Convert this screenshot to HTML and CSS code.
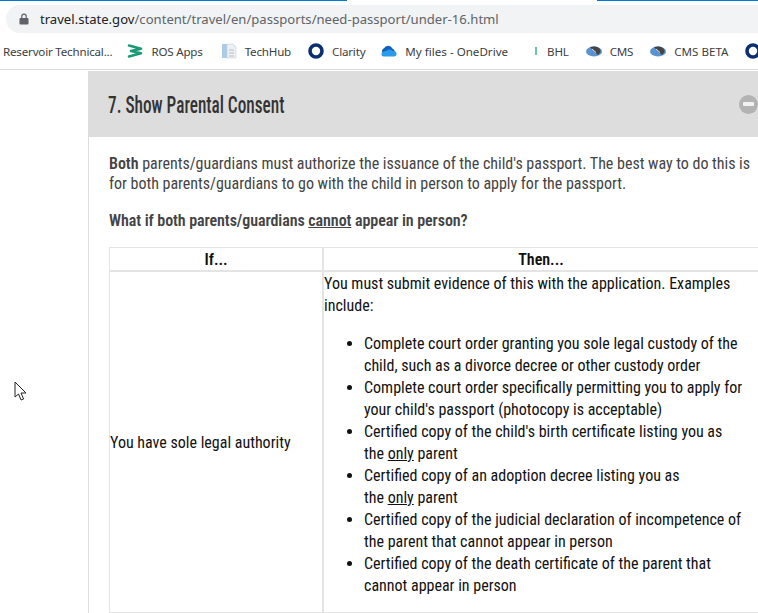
FILE: index.html
```html
<!DOCTYPE html>
<html lang="en">
<head>
  <meta charset="UTF-8">
  <title>Apply for a passport: under 16</title>
  <link rel="stylesheet" href="styles.css">
</head>
<body>
<div class="browser">
  <!-- top strip -->
  <div class="progress">
    <span class="progress-left"></span>
    <span class="progress-right"></span>
  </div>

  <!-- address bar -->
  <div class="omnibox">
    <svg class="lock" width="10" height="12" viewBox="0 0 10 12"><path d="M2.2 5V3.4a2.8 2.8 0 0 1 5.6 0V5h.9c.4 0 .8.4.8.8v5c0 .4-.4.8-.8.8H1.3c-.4 0-.8-.4-.8-.8v-5c0-.4.4-.8.8-.8zm1.2 0h3.2V3.4a1.6 1.6 0 0 0-3.2 0z" fill="#5f6368"/></svg>
    <span class="url"><span class="host">travel.state.gov</span>/content/travel/en/passports/need-passport/under-16.html</span>
  </div>

  <!-- bookmarks -->
  <div class="bookmarks">
    <span class="bm bm-first">Reservoir Technical...</span>
    <span class="bm bm-ros">
      <svg width="16" height="16" viewBox="0 0 16 16"><path d="M2 2.5l12 3.2-10 2.3 10 2.3-12 3.2" fill="none" stroke="#1c9a78" stroke-width="2.6" stroke-linejoin="round" stroke-linecap="round"/></svg>
      ROS Apps
    </span>
    <span class="bm bm-tech">
      <svg width="16" height="16" viewBox="0 0 16 16"><rect x="1" y="1" width="5" height="14" fill="#a9cbe8"/><path d="M6 1h6l3 3v11H6z" fill="#eef1f4" stroke="#c6ccd2" stroke-width=".6"/><path d="M8 7h5M8 10h5M8 13h5" stroke="#b4bcc4"/></svg>
      TechHub
    </span>
    <span class="bm bm-clarity">
      <svg width="16" height="16" viewBox="0 0 16 16"><circle cx="8" cy="8" r="6" fill="none" stroke="#0c2f73" stroke-width="3.6"/></svg>
      Clarity
    </span>
    <span class="bm bm-drive">
      <svg width="17" height="12" viewBox="0 0 17 12"><path d="M3.5 9A3.2 3.2 0 0 1 4 3.3 4.6 4.6 0 0 1 12.4 3.4 3.6 3.6 0 0 1 14 9z" fill="#0f62b8"/><path d="M4 11.5a2.4 2.4 0 0 1-.4-4.8L7 5.6a3.5 3.5 0 0 1 5.5.4h1.6a2.8 2.8 0 0 1 .4 5.5z" fill="#2a9bea"/></svg>
      My files - OneDrive
    </span>
    <span class="bm bm-bhl">
      <svg width="3" height="8" viewBox="0 0 3 8"><rect x="1" width="2" height="8" fill="#62c7b4"/></svg>
      BHL
    </span>
    <span class="bm bm-cms">
      <svg width="16" height="11" viewBox="0 0 16 11"><ellipse cx="8" cy="5.5" rx="8" ry="5" fill="#5b93cf"/><path d="M4 1.2c3-1.2 7-1 9 1 1.5 1.5 2 3 1 4.5l-2 2.2z" fill="#454545"/><path d="M6 3l4 3.5" stroke="#ddd" stroke-width="1"/></svg>
      CMS
    </span>
    <span class="bm bm-beta">
      <svg width="16" height="11" viewBox="0 0 16 11"><ellipse cx="8" cy="5.5" rx="8" ry="5" fill="#5b93cf"/><path d="M4 1.2c3-1.2 7-1 9 1 1.5 1.5 2 3 1 4.5l-2 2.2z" fill="#454545"/><path d="M6 3l4 3.5" stroke="#ddd" stroke-width="1"/></svg>
      CMS BETA
    </span>
    <span class="bm">
      <svg width="16" height="16" viewBox="0 0 16 16"><circle cx="8" cy="8" r="6" fill="none" stroke="#0c2f73" stroke-width="3.6"/></svg>
    </span>
  </div>

  <!-- page -->
  <div class="page">
    <div class="panel">
      <div class="panel-head">
        <h2 class="panel-title">7. Show Parental Consent</h2>
        <span class="collapse"><span class="collapse-bar"></span></span>
      </div>
      <div class="panel-body">
        <p class="intro"><b>Both</b> parents/guardians must authorize the issuance of the child's passport. The best way to do this is for both parents/guardians to go with the child in person to apply for the passport.</p>
        <p class="question">What if both parents/guardians <u>cannot</u> appear in person?</p>
        <table class="consent">
          <tr>
            <th class="col-if">If...</th>
            <th class="col-then">Then...</th>
          </tr>
          <tr>
            <td>You have sole legal authority</td>
            <td>
              <p class="then-lead">You must submit evidence of this with the application. Examples include:</p>
              <ul class="evidence">
                <li>Complete court order granting you sole legal custody of the child, such as a divorce decree or other custody order</li>
                <li>Complete court order specifically permitting you to apply for your child's passport (photocopy is acceptable)</li>
                <li>Certified copy of the child's birth certificate listing you as the&nbsp;<u>only</u> parent</li>
                <li>Certified copy of an adoption decree listing you as<br>the&nbsp;<u>only</u> parent</li>
                <li>Certified copy of the judicial declaration of incompetence of the parent that cannot appear in person</li>
                <li>Certified copy of the death certificate of the parent that cannot appear in person</li>
              </ul>
            </td>
          </tr>
        </table>
      </div>
    </div>
  </div>

  <!-- mouse pointer -->
  <svg class="pointer" width="13" height="21" viewBox="0 0 13 21"><path d="M1 1v15l3.5-3 2.6 6 2.5-1-2.6-6H12z" fill="#fff" stroke="#222" stroke-width="1"/></svg>
</div>
</body>
</html>
```

FILE: styles.css
```css
html, body {
  margin: 0;
  padding: 0;
  background: #fff;
}
.browser {
  position: relative;
  width: 758px;
  height: 613px;
  overflow: hidden;
  font-family: 'Roboto', 'Liberation Sans', sans-serif;
}
/* top strip */
.progress {
  display: flex;
  justify-content: space-between;
  height: 5px;
}
.progress span {
  height: 1px;
  background: #0078d4;
}
.progress-left { width: 347px; }
.progress-right { width: 161px; }
/* address bar */
.omnibox {
  display: flex;
  align-items: center;
  gap: 11px;
  height: 28px;
  margin-left: 6px;
  padding-left: 13px;
  background: #f1f3f4;
  border-radius: 14px 0 0 14px;
}
.url {
  font-family: 'Noto Sans', 'Open Sans', sans-serif;
  font-size: 13.1px;
  color: #5f6368;
  white-space: nowrap;
}
.host { color: #202124; }
/* bookmarks */
.bookmarks {
  display: flex;
  align-items: center;
  height: 36px;
  padding-left: 3px;
  border-bottom: 1px solid #dadce0;
  white-space: nowrap;
}
.bm {
  display: inline-flex;
  align-items: center;
  gap: 8px;
  font-family: 'Noto Sans', 'Open Sans', sans-serif;
  font-size: 11.6px;
  color: #3c4043;
  letter-spacing: -0.2px;
  flex: none;
}
.bm-first { margin-right: 15px; }
.bm-ros { margin-right: 18px; }
.bm-tech { margin-right: 17px; }
.bm-clarity { margin-right: 15px; }
.bm-drive { margin-right: 26px; letter-spacing: 0; }
.bm-bhl { margin-right: 17px; gap: 10px; }
.bm-cms { margin-right: 17px; }
.bm-beta { margin-right: 16px; letter-spacing: 0; }
/* page */
.page {
  padding-left: 88px;
}
.panel {
  width: 670px;
  margin-top: 1px;
  border-left: 1px solid #ddd;
  min-height: 544px;
}
.panel-head {
  display: flex;
  align-items: center;
  justify-content: space-between;
  height: 66px;
  padding: 0 0 0 19px;
  background: #ddd;
}
.panel-title {
  margin: 2px 0 0;
  font-family: 'Roboto', sans-serif;
  font-stretch: 75%;
  font-size: 23px;
  font-weight: 500;
  color: #333;
  white-space: nowrap;
  transform: scaleX(0.75);
  transform-origin: left center;
}
.collapse {
  display: flex;
  align-items: center;
  justify-content: center;
  width: 19px;
  height: 19px;
  margin-right: 1px;
  border-radius: 50%;
  background: #b3b3b3;
}
.collapse-bar {
  width: 11px;
  height: 4px;
  border-radius: 1px;
  background: #f2f2f2;
}
.panel-body {
  padding: 17px 0 0 20px;
  font-size: 16px;
  line-height: 20px;
  color: #444;
  font-stretch: 75%;
}
.intro {
  margin: 0 0 17px;
  width: 644px;
  letter-spacing: -0.015px;
}
.intro b {
  font-weight: 600;
}
.question {
  margin: 0 0 16px;
  font-weight: 600;
  letter-spacing: -0.07px;
  color: #444;
}
.consent {
  width: 650px;
  border-collapse: separate;
  border-spacing: 0;
  table-layout: fixed;
  color: #111;
}
.consent th, .consent td {
  border: 1px solid #e4e4e4;
  padding: 1px 0 0;
}
.consent th {
  height: 21px;
  line-height: 21px;
  font-weight: 600;
}
.col-if {
  width: 212px;
}
.consent td {
  line-height: 22px;
}
.then-lead {
  margin: 0 0 16px;
  width: 425px;
}
.evidence {
  margin: 0 0 15px;
  padding: 0 0 0 40px;
  width: 385px;
}
/* mouse pointer */
.pointer {
  position: absolute;
  left: 14px;
  top: 381px;
}
```
